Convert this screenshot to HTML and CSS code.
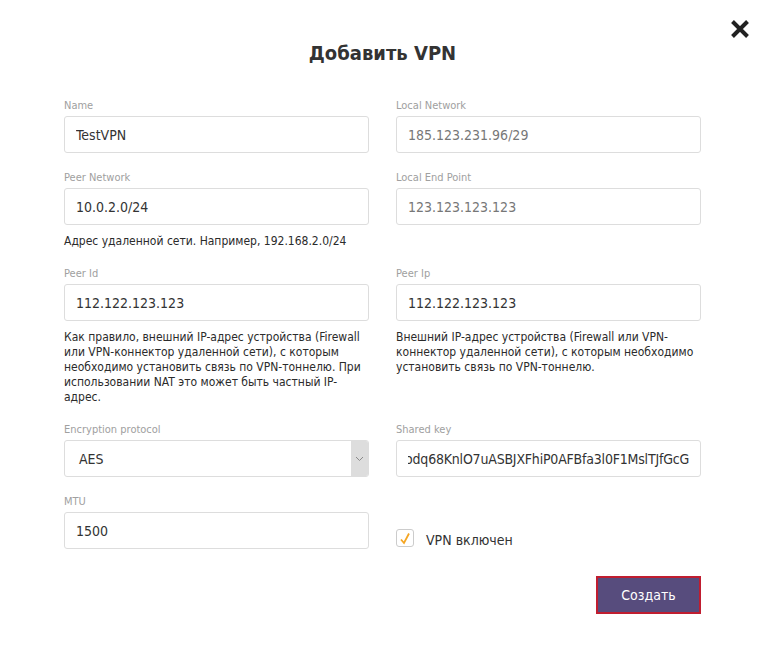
FILE: index.html
```html
<!DOCTYPE html>
<html lang="ru">
<head>
<meta charset="utf-8">
<title>Добавить VPN</title>
<link rel="stylesheet" href="styles.css">
</head>
<body>
<div class="modal">
  <button class="close" type="button" aria-label="Закрыть">
    <svg width="20" height="18" viewBox="0 0 20 18"><path d="M2.5 1.5 L17.5 16.5 M17.5 1.5 L2.5 16.5" stroke="#222" stroke-width="4" fill="none"/></svg>
  </button>
  <h1 class="title">Добавить VPN</h1>
  <form class="grid">
    <div class="field">
      <label class="label">Name</label>
      <input class="input" value="TestVPN">
    </div>
    <div class="field">
      <label class="label">Local Network</label>
      <input class="input muted" value="185.123.231.96/29" readonly>
    </div>
    <div class="field">
      <label class="label">Peer Network</label>
      <input class="input" value="10.0.2.0/24">
      <p class="help">Адрес удаленной сети. Например, 192.168.2.0/24</p>
    </div>
    <div class="field">
      <label class="label">Local End Point</label>
      <input class="input muted" value="123.123.123.123" readonly>
    </div>
    <div class="field">
      <label class="label">Peer Id</label>
      <input class="input" value="112.122.123.123">
      <p class="help">Как правило, внешний IP-адрес устройства (Firewall или VPN-коннектор удаленной сети), с которым необходимо установить связь по VPN-тоннелю. При использовании NAT это может быть частный IP-адрес.</p>
    </div>
    <div class="field">
      <label class="label">Peer Ip</label>
      <input class="input" value="112.122.123.123">
      <p class="help">Внешний IP-адрес устройства (Firewall или VPN-коннектор удаленной сети), с которым необходимо установить связь по VPN-тоннелю.</p>
    </div>
    <div class="field">
      <label class="label">Encryption protocol</label>
      <div class="select">
        <span class="select-value">AES</span>
        <span class="select-arrow"><svg width="9" height="6" viewBox="0 0 9 6"><path d="M1 1 L4.5 4.5 L8 1" stroke="#8a8a8a" stroke-width="1" fill="none"/></svg></span>
      </div>
    </div>
    <div class="field">
      <label class="label">Shared key</label>
      <div class="input key"><div class="key-clip"><span class="key-text">5odq68KnlO7uASBJXFhiP0AFBfa3l0F1MslTJfGcG</span></div></div>
    </div>
    <div class="field">
      <label class="label">MTU</label>
      <input class="input" value="1500">
    </div>
    <div class="field check-field">
      <label class="check">
        <span class="box"><svg width="12" height="13" viewBox="0 0 12 13"><path d="M2 7.5 L5 11 L10 1.5" stroke="#f5a623" stroke-width="1.8" fill="none"/></svg></span>
        <span class="check-text">VPN включен</span>
      </label>
    </div>
  </form>
  <div class="actions">
    <button class="submit" type="button">Создать</button>
  </div>
</div>
</body>
</html>
```
FILE: styles.css
```css
* { box-sizing: border-box; }
html, body { margin: 0; padding: 0; background: #fff; }
body {
  font-family: "DejaVu Sans Condensed", "DejaVu Sans", sans-serif;
  color: #333;
}
.modal {
  position: relative;
  width: 765px;
  padding: 41px 64px 0;
}
.close {
  position: absolute;
  top: 20px;
  left: 730px;
  width: 20px;
  height: 18px;
  padding: 0;
  border: 0;
  background: none;
  display: flex;
}
.title {
  margin: 0 0 33px;
  font-size: 20px;
  line-height: 24px;
  font-weight: bold;
  text-align: center;
  color: #333;
}
.grid {
  display: grid;
  grid-template-columns: 305px 305px;
  column-gap: 27px;
  margin: 0;
}
.field {
  display: flex;
  flex-direction: column;
  padding-bottom: 17px;
}
.label {
  font-size: 11px;
  line-height: 16px;
  margin-bottom: 2px;
  color: #a0a0a0;
}
.input {
  width: 100%;
  height: 37px;
  border: 1px solid #ddd;
  border-radius: 3px;
  padding: 0 11px;
  font: 14px "DejaVu Sans Condensed", "DejaVu Sans", sans-serif;
  color: #333;
  background: #fff;
  outline: none;
}
.input.muted { color: #777; }
.key {
  display: flex;
  align-items: center;
}
.key-clip {
  flex: 1;
  display: flex;
  justify-content: flex-end;
  overflow: hidden;
  white-space: nowrap;
}
.key-text {
  flex: none;
  letter-spacing: -0.2px;
}
.help {
  margin: 9px 0 0;
  font-size: 12px;
  line-height: 15px;
  color: #2b2b2b;
}
.select {
  display: flex;
  height: 37px;
  border: 1px solid #ddd;
  border-radius: 3px;
  overflow: hidden;
}
.select-value {
  flex: 1;
  display: flex;
  align-items: center;
  padding-left: 14px;
  font-size: 14px;
  color: #333;
}
.select-arrow {
  width: 17px;
  background: #ddd;
  display: flex;
  align-items: center;
  justify-content: center;
}
.check-field {
  justify-content: flex-end;
  padding-bottom: 19px;
}
.check {
  display: flex;
  align-items: center;
  gap: 12px;
}
.box {
  width: 18px;
  height: 18px;
  border: 1px solid #ccc;
  border-radius: 3px;
  display: flex;
  align-items: center;
  justify-content: center;
}
.check-text {
  font-size: 14px;
  color: #333;
  position: relative;
  top: 2px;
}
.actions {
  display: flex;
  justify-content: flex-end;
  padding-top: 10px;
}
.submit {
  width: 105px;
  height: 38px;
  background: #574c7d;
  border: 2px solid #c01d30;
  color: #fff;
  font: 14px "DejaVu Sans Condensed", "DejaVu Sans", sans-serif;
  padding: 0;
}
```
